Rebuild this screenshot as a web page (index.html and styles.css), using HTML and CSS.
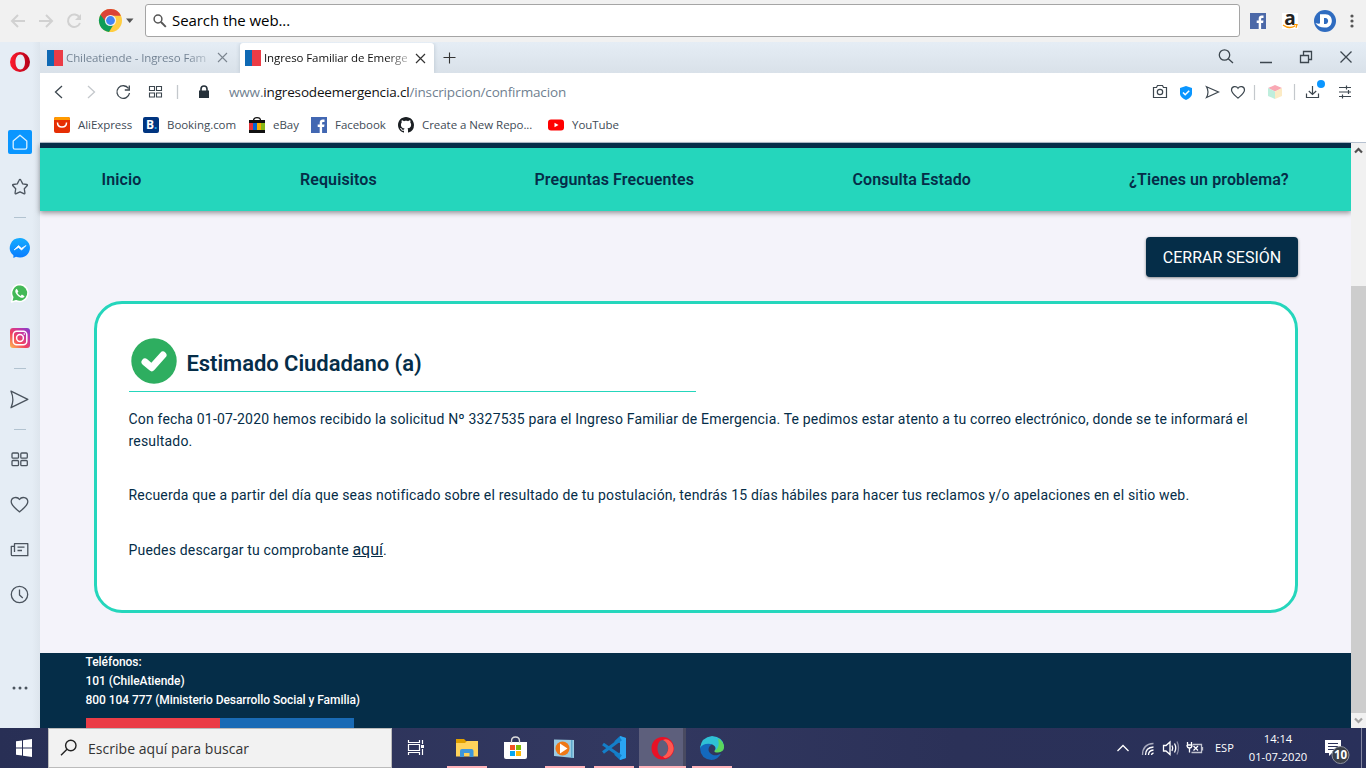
FILE: index.html
```html
<!DOCTYPE html>
<html lang="es">
<head>
<meta charset="utf-8">
<title>Ingreso Familiar de Emergencia</title>
<link rel="stylesheet" href="styles.css">
</head>
<body>
<div class="desktop">
  <header class="searchbar">
    <svg class="history" width="92" height="42" viewBox="0 0 92 42" fill="none" stroke="#d1d1d1" stroke-width="2"><path d="M25 21H12M18 15l-6 6 6 6M39 21h13M46 15l6 6-6 6"/><path d="M79.500 17.500A6.200 6.200 0 1 0 80 23"/><path d="M81 14v6h-6z" fill="#d1d1d1" stroke="none"/></svg>
    <svg class="chrome" width="42" height="42" viewBox="0 0 42 42"><circle cx="18.500" cy="20.500" r="11.500" fill="#ffcd40"/><path d="M18.500 20.500 8.500 14.700A11.500 11.500 0 0 0 17 32l5.500-9z" fill="#0f9d58"/><path d="M8.500 14.700a11.500 11.500 0 0 1 20.400 1H18.500l-4 7z" fill="#db4437"/><circle cx="18.500" cy="20.500" r="5.600" fill="#f1f1f1"/><circle cx="18.500" cy="20.500" r="4.400" fill="#4285f4"/><path d="M34 18.500h7.500L37.700 23z" fill="#555"/></svg>
    <div class="field">
      <svg width="14" height="14" viewBox="0 0 14 14" fill="none" stroke="#555" stroke-width="1.500"><circle cx="5" cy="5" r="3.900"/><path d="m8 8 4.800 4.800" stroke-width="1.900"/></svg>
      <span class="field-text t">Search the web...</span>
    </div>
    <div class="shortcuts">
      <svg width="16" height="16" viewBox="0 0 16 16"><path fill="#4c69a8" d="M0 0h16v16H0z"/><path fill="#fff" d="M8.700 16V10H6.700V7.500h2V5.800c0-2.100 1.200-3.200 3.100-3.200h1.700v2.300h-1.200c-.9 0-1.200.4-1.200 1.200v1.400h2.400L13.100 10h-2v6z"/></svg>
      <span class="amazon">a<svg width="16" height="5" viewBox="0 0 16 5" fill="none" stroke="#f90" stroke-width="1.300"><path d="M1 1q6 4.500 12 1M12 .7l3 0-1 3"/></svg></span>
      <svg width="22" height="22" viewBox="0 0 22 22"><circle cx="11" cy="11" r="11" fill="#2f6cc0"/><path d="M6 4.200h5.500c8.500 0 8.500 13.300 0 13.300-4 .3-8-1-10-4.500 1.800.8 3.200.9 4.500.6z" fill="#fff"/><path d="M10 8h1.500c3.500 0 3.500 6 0 6H10z" fill="#2f6cc0"/></svg>
      <svg width="4" height="16" viewBox="0 0 4 16" fill="#555"><circle cx="2" cy="3" r="1.600"/><circle cx="2" cy="8" r="1.600"/><circle cx="2" cy="13" r="1.600"/></svg>
    </div>
  </header>

  <div class="browser">
    <aside class="sidebar">
      <svg width="40" height="686" viewBox="0 42 40 686" fill="none" stroke="#4b545e" stroke-width="1.300" stroke-linejoin="round">
        <defs>
          <linearGradient id="red" x1="0" x2="1"><stop offset="0" stop-color="#ff1b2d"/><stop offset="1" stop-color="#b30019"/></linearGradient>
          <linearGradient id="msg" x1="0" y1="0" x2="0" y2="1"><stop offset="0" stop-color="#14acff"/><stop offset="1" stop-color="#0a7cff"/></linearGradient>
          <linearGradient id="ig" x1="0" y1="1" x2="1" y2="0"><stop offset="0" stop-color="#fec053"/><stop offset=".4" stop-color="#f2425c"/><stop offset=".7" stop-color="#c536a4"/><stop offset="1" stop-color="#7a3fd0"/></linearGradient>
        </defs>
        <path fill="url(#red)" stroke="none" fill-rule="evenodd" d="M20 52a10 10 0 1 0 0 20 10 10 0 0 0 0-20zm.3 2.500c3 0 4.700 3.300 4.700 7.500s-1.700 7.500-4.700 7.500-4.800-3.300-4.800-7.500 1.800-7.500 4.800-7.500z"/>
        <rect x="8" y="130" width="24" height="24" rx="2" fill="#0a96ff" stroke="none"/>
        <path stroke="#d9f0ff" d="M20 135.200 13.200 141v6.500q0 1.700 1.700 1.700h10.200q1.700 0 1.700-1.700V141z"/>
        <path d="M20 179.500q.6 0 .9.700l1.800 3.700 4 .6q1.200.3.400 1.300l-2.800 3 .6 4q.1 1.400-1.100.9L20 191.800l-3.800 1.900q-1.200.5-1.100-.9l.6-4-2.800-3q-.8-1 .4-1.300l4-.6 1.800-3.700q.3-.7.900-.7z"/>
        <path stroke="#b2c3d0" stroke-width="1" d="M14 217.500h12M14 368.500h12M14 429.500h12"/>
        <path fill="url(#msg)" stroke="none" d="M20 238a10 9.800 0 1 1-4 18.800l-2.600 1.100v-2.600A10 9.800 0 0 1 20 238z"/><path d="m14 250 4.500-4.500 3 2.700 4.500-2.700-4.400 4.600-3.100-2.600z" fill="#fff" stroke="#fff" stroke-width=".7"/>
        <path d="M20 284.500a8.500 8.500 0 0 0-7.300 12.700L11.500 302l4.600-1.200A8.500 8.500 0 1 0 20 284.500z" fill="#43b957" stroke="#fff" stroke-width="1.500"/><path d="M16.800 288.700c-2.100.9-2 3.700.4 6.200s5.600 4.400 7.400 1.400l-2.700-1.700-1.300 1.300q-2-.8-3.200-3l1-1.300z" fill="#fff" stroke="none"/>
        <rect x="10" y="328" width="20" height="20" rx="3" fill="url(#ig)" stroke="none"/><g stroke="#fff" stroke-width="1.500"><rect x="13.200" y="331.200" width="13.600" height="13.600" rx="3.500"/><circle cx="20" cy="338" r="3.400"/><path d="M23.700 334h1.200"/></g>
        <path d="m11 391.200 16.800 8.200L11 407.700q3.700-8.200 0-16.500z"/>
        <rect x="12" y="453" width="6.500" height="5.200" rx="1"/><rect x="20.800" y="453" width="6.500" height="5.200" rx="1"/><rect x="12" y="460.500" width="6.500" height="5.200" rx="1"/><rect x="20.800" y="460.500" width="6.500" height="5.200" rx="1"/>
        <path d="M19.500 499.500c2-3.200 8.300-2.600 8.300 2.200 0 3.700-4 6.500-8.300 10.200-4.300-3.700-8.300-6.500-8.300-10.200 0-4.800 6.300-5.400 8.300-2.200z"/>
        <path d="M14.500 552v-8.300h13.300v12H12.500q-1.200 0-1.200-1.200v-8.200h3.200M17.500 547.200h7M17.500 550.500h4.500"/>
        <circle cx="19.500" cy="594.500" r="8.200"/><path d="M19.500 589.500v5.500l3.300 3"/>
        <g fill="#4b545e" stroke="none"><circle cx="14" cy="688" r="1.500"/><circle cx="20" cy="688" r="1.500"/><circle cx="26" cy="688" r="1.500"/></g>
      </svg>
    </aside>

    <div class="window">
      <div class="tabs">
        <div class="tab"><i class="flag"></i><span class="tab-title t">Chileatiende - Ingreso Fam</span><svg width="11" height="11" viewBox="0 0 11 11" stroke="#7b858f" stroke-width="1.100"><path d="m1 1 9 9m0-9-9 9"/></svg></div>
        <div class="tab active"><i class="flag"></i><span class="tab-title t">Ingreso Familiar de Emerge</span><svg width="11" height="11" viewBox="0 0 11 11" stroke="#333" stroke-width="1.200"><path d="m1 1 9 9m0-9-9 9"/></svg></div>
        <svg class="plus" width="12" height="12" viewBox="0 0 12 12" stroke="#333" stroke-width="1.100"><path d="M6.500 .5v11M.5 5.500h12"/></svg>
        <svg class="controls" width="140" height="31" viewBox="1216 42 140 31" fill="none" stroke="#3c464e" stroke-width="1.300"><circle cx="1224.500" cy="55" r="5.200"/><path d="m1228.300 58.800 4.700 4.300M1260 62.500h12"/><path d="M1300.500 55.500h8v7h-8zM1303.500 55v-3.500h8v8H1309"/><path d="m1340.500 51.500 11 11m0-11-11 11"/></svg>
      </div>

      <div class="address">
        <svg width="172" height="38" viewBox="40 73 172 38" fill="none" stroke="#3c464e" stroke-width="1.300"><path d="m62 86-6.500 6 6.500 6"/><path stroke="#c4c8cc" d="m88 86 6.500 6-6.500 6"/><path d="M128.500 88.500a6.300 6.300 0 1 0 1 4.500M129.300 85.500V90h-4.500"/><path stroke-width="1.100" d="M149.500 86.500h5v4h-5zM156.500 86.500h5v4h-5zM149.500 93h5v4h-5zM156.500 93h5v4h-5z"/><path stroke="#c4c8cc" d="M177.500 85v14"/><path fill="#26313a" stroke="none" d="M199 90.500h10v7.500h-10z"/><path stroke="#26313a" stroke-width="1.600" d="M201 91v-2a3 3 0 0 1 6 0v2"/></svg>
        <span class="url t">www.<b>ingresodeemergencia.cl</b>/inscripcion/confirmacion</span>
        <svg class="tools" width="210" height="38" viewBox="1146 73 210 38" fill="none" stroke="#3c464e" stroke-width="1.200"><path d="M1153.500 87.500h3l1-2h5l1 2h3v10h-13z"/><circle cx="1160" cy="92" r="2.700"/><path fill="#0a96ff" stroke="none" d="m1186 86 6 2v6q-.5 3.500-6 6-5.500-2.500-6-6v-6z"/><path stroke="#fff" stroke-width="1.600" d="m1183 92.500 2.200 2.200 4-4"/><path d="m1206.500 86.800 12 5.200-12 5.500q3-5.500 0-10.700z"/><path d="M1238 88.300c1.700-2.800 6.500-2.200 6.500 1.800 0 3-3 5-6.500 8-3.500-3-6.500-5-6.500-8 0-4 4.800-4.600 6.500-1.800z"/><path stroke="#c4c8cc" d="M1254.500 85v15M1294.500 84v16"/><g stroke="none"><path fill="#f9a8b4" d="m1275 85 7 3-7 3.500-7-3.500z"/><path fill="#bfeedd" d="m1268 88 7 3.500v7.500l-7-3z"/><path fill="#fcebc5" d="m1282 88-7 3.500v7.500l7-3z"/></g><path d="M1306.500 93.500v4h12v-4M1312.500 86v8.500M1308.800 91l3.700 3.500 3.700-3.500"/><circle cx="1321" cy="84" r="4" fill="#0a96ff" stroke="none"/><path d="M1339 87.500h12M1339 92h12M1339 96.500h12M1346.500 85.500v4M1348.500 90v4M1342.500 94.500v4"/></svg>
      </div>

      <nav class="bookmarks">
        <a class="bm w1"><svg width="16" height="16" viewBox="0 0 16 16"><rect width="16" height="16" rx="2" fill="#e62e04"/><path d="M0 3V2q0-2 2-2h12q2 0 2 2v1z" fill="#ff9a00"/><path d="M3.500 5.500q0 4.500 4.500 4.500t4.500-4.500" fill="none" stroke="#fff" stroke-width="1.500"/></svg><span class="t">AliExpress</span></a>
        <a class="bm w2"><i class="booking">B<em>.</em></i><span class="t">Booking.com</span></a>
        <a class="bm w3"><svg width="16" height="16" viewBox="0 0 16 16"><path d="M0 4h16v9H0z" fill="#e53238"/><path d="M4 6h4v7H4z" fill="#0064d2"/><path d="M8 6h4v7H8z" fill="#f5af02"/><path d="M12 6h4v7h-4z" fill="#86b817"/><path d="M0 3h16v3H0zM0 13h16v3H0z" fill="#111"/><path d="M4.500 6V3.500a3.500 2.800 0 0 1 7 0V6" fill="none" stroke="#111" stroke-width="1.200"/></svg><span class="t">eBay</span></a>
        <a class="bm w4"><svg width="16" height="16" viewBox="0 0 16 16"><path fill="#4267b2" d="M0 0h16v16H0z"/><path fill="#fff" d="M8.700 16V10H6.700V7.500h2V5.800c0-2.100 1.200-3.200 3.100-3.200h1.700v2.300h-1.200c-.9 0-1.200.4-1.200 1.200v1.400h2.400L13.100 10h-2v6z"/></svg><span class="t">Facebook</span></a>
        <a class="bm w5"><svg width="16" height="16" viewBox="0 0 16 16" fill="#1b1f23"><path d="M8 0C3.580 0 0 3.580 0 8c0 3.540 2.290 6.530 5.470 7.590.4.070.55-.17.55-.38 0-.19-.01-.82-.01-1.490-2.010.37-2.530-.49-2.690-.94-.09-.23-.48-.94-.82-1.130-.28-.15-.68-.52-.01-.53.63-.01 1.080.58 1.230.82.720 1.210 1.870.87 2.330.66.070-.52.280-.87.510-1.070-1.780-.2-3.640-.89-3.640-3.950 0-.87.31-1.590.82-2.150-.08-.2-.36-1.020.08-2.120 0 0 .67-.21 2.200.82.640-.18 1.320-.27 2-.27s1.360.09 2 .27c1.530-1.040 2.200-.82 2.200-.82.44 1.100.16 1.920.08 2.120.51.560.82 1.270.82 2.150 0 3.070-1.870 3.750-3.650 3.950.29.25.54.73.54 1.480 0 1.070-.01 1.930-.01 2.200 0 .21.15.46.55.38A8.010 8.010 0 0 0 16 8c0-4.420-3.580-8-8-8z"/></svg><span class="t">Create a New Repo...</span></a>
        <a class="bm w6"><svg width="16" height="16" viewBox="0 0 16 16"><rect y="2.500" width="16" height="11" rx="3" fill="red"/><path d="m6.500 5.800 4 2.200-4 2.200z" fill="#fff"/></svg><span class="t">YouTube</span></a>
      </nav>

      <div class="viewport">
        <main class="page">
          <nav class="menu"><a class="m1 t">Inicio</a><a class="m2 t">Requisitos</a><a class="m3 t">Preguntas Frecuentes</a><a class="m4 t">Consulta Estado</a><a class="m5 t">¿Tienes un problema?</a></nav>
          <section class="content">
            <button class="logout">CERRAR SESIÓN</button>
            <article class="card">
              <h1><svg width="46" height="46" viewBox="0 0 46 46"><circle cx="23" cy="23" r="22.700" fill="#2eae60"/><path d="m14 24 6.700 5.700L32 17" fill="none" stroke="#fff" stroke-width="7" stroke-linecap="round" stroke-linejoin="round"/></svg><span class="t">Estimado Ciudadano (a)</span></h1>
              <p>Con fecha 01-07-2020 hemos recibido la solicitud Nº 3327535 para el Ingreso Familiar de Emergencia. Te pedimos estar atento a tu correo electrónico, donde se te informará el<br>resultado.</p>
              <p>Recuerda que a partir del día que seas notificado sobre el resultado de tu postulación, tendrás 15 días hábiles para hacer tus reclamos y/o apelaciones en el sitio web.</p>
              <p>Puedes descargar tu comprobante <a>aquí</a>.</p>
            </article>
          </section>
          <footer class="footer">Teléfonos:<br>101 (ChileAtiende)<br>800 104 777 (Ministerio Desarrollo Social y Familia)<div class="stripe"></div></footer>
        </main>
        <div class="scroll">
          <svg width="15" height="15" viewBox="0 0 15 15" fill="none" stroke="#505050" stroke-width="2.200"><path d="M4 9.500 7.500 6 11 9.500"/></svg>
          <div class="thumb"></div>
          <svg width="15" height="15" viewBox="0 0 15 15" fill="none" stroke="#a3a3a3" stroke-width="2.200"><path d="M4 5.500 7.500 9 11 5.500"/></svg>
        </div>
      </div>
    </div>
  </div>

  <footer class="taskbar">
    <svg class="start" width="48" height="40" viewBox="0 0 48 40" fill="#fff"><path d="m16 13.200 6-.8v7.100h-6zM23 12.300l9-1.200v8.400h-9zM16 20.500h6v7.100l-6-.8zM23 20.500h9v8.400l-9-1.200z"/></svg>
    <div class="search">
      <svg width="18" height="18" viewBox="0 0 18 18" fill="none" stroke="#222" stroke-width="1.400"><circle cx="10.800" cy="6.500" r="5.200"/><path d="M7 10.300 1 16.300"/></svg>
      <span class="t">Escribe aquí para buscar</span>
    </div>
    <svg class="apps" width="348" height="40" viewBox="392 728 348 40">
      <path fill="#5d5f7c" d="M639 728h44v40h-44z"/><path fill="#494a61" d="M683 728h3v40h-3z"/>
      <path fill="#ffb3ba" d="M447 766h40v2h-40zM545 766h40v2h-40zM594 766h40v2h-40zM639 766h47v2h-47zM692 766h40v2h-40z"/>
      <path fill="none" stroke="#fff" stroke-width="1.200" d="M408.500 740v2.500h11V740M408.500 755v-2.500h11v2.500M408.500 744.500h11v6h-11zM422.500 740v4M422.500 749v6"/><path fill="#fff" d="M421 745h3v3h-3z"/>
      <path fill="#e0a000" d="M456 739h8l2 2h11v5h-21z"/><path fill="#ffd35b" d="M456 743h9l2-2h11v15.500h-22z"/><path fill="#3e97dc" d="M460 757v-6q0-2 2-2h9.500q2 0 2 2v6h-4v-4h-5.500v4z"/>
      <path fill="#fff" d="M504 742h23v15q0 2-2 2h-19q-2 0-2-2z"/><path fill="none" stroke="#ddd" stroke-width="1.300" d="M511.500 743v-2q0-4 4-4t4 4v2"/><path fill="#f35325" d="M510 745h5v5h-5z"/><path fill="#81bc06" d="M516 745h5v5h-5z"/><path fill="#05a6f0" d="M510 751h5v5h-5z"/><path fill="#ffba08" d="M516 751h5v5h-5z"/>
      <path fill="#9bcbe2" d="M554 739.500 574 740v18l-20-2z"/><path fill="#5fa8cc" d="M571 740h1.500v18H571z"/><circle cx="562.500" cy="748.500" r="7" fill="#ef7816"/><path fill="#fff" d="m560 743.500 7.500 5-7.500 5z"/>
      <path fill="#0f7fcb" d="m620 736 6 2v20l-6 2-6-5.500 6-2v-9.500l-6-1.500z"/><path fill="#2aa5f2" d="m620 736 6 2v20l-6 2z"/><path fill="none" stroke="#147fc9" stroke-width="3.200" d="m603 744 18 12.500M603 752.500l18-13.500"/>
      <path fill="#e81126" fill-rule="evenodd" d="M662.500 737c-6.500 0-11 5-11 11.200s4.500 11.300 11 11.300 11.500-5 11.500-11.300S669 737 662.500 737zm.3 3c3 0 5.200 3.500 5.200 8.200s-2.200 8.300-5.200 8.300-5.300-3.600-5.300-8.300 2.300-8.200 5.300-8.200z"/><path fill="#ff5850" d="M663 740q4-2 7.500 1.500t3 8.500q-1 4.500-5 7t-5.500-.5c7-3 7-13.500 0-16.500z"/>
      <path fill="#1469bd" d="M700 748c1-6 9-8 13-4-4 1-6 6-3 9s7 3 11 .5q-3 6-9.500 6.500-11-1-11.500-12z"/><path fill="#2fc1d5" d="M700 748q1.500-11 12-12 11 1 12 10c0 6-7 7-9.500 5 2.500-3 0-6.500-4-7q-7-1-10.500 4z"/><path fill="#5bd65c" d="M718 738.500q6 3 6 9-.5 4.500-6 5-4 0-3.500-1.500 6-3 3.500-12.500z"/>
    </svg>
    <svg class="tray" width="96" height="40" viewBox="1112 728 96 40" fill="none" stroke="#fff" stroke-width="1.300"><path d="m1117.500 751 5.500-5.500 5.500 5.500"/><g stroke="#a8aabd"><path d="M1142.500 755q0-11 11-11.500"/><path stroke="#fff" d="M1145.500 755q0-7.500 8-8M1148.500 755q0-4.500 5-5M1151.500 755q0-1.500 2-2"/></g><path d="M1163.500 745.500h2.500l4-3.500v12.500l-4-3.500h-2.500zM1172 745.500q1.500 2.500 0 5.500M1174.500 743.500q2.500 4.500 0 9"/><path stroke="#888aa4" d="M1177 741.500q3 6.500 0 13"/><path d="M1187.500 742v3M1191.500 742v3M1187 745h5q0 3-2.500 3t-2.500-3M1189.500 748v4.500"/><path stroke="#c2c4d0" d="M1193 744.500h8.500v8h-10M1202.500 747v3.500"/><path d="m1193.500 746 4.500 4.500m0-4.500-4.500 4.500"/></svg>
    <span class="lang">ESP</span>
    <div class="clock"><span>14:14</span><span class="t">01-07-2020</span></div>
    <svg class="notify" width="46" height="40" viewBox="1320 728 46 40"><path fill="#fff" d="M1325 740h16v13h-9l-3 3v-3h-4z"/><path stroke="#2b3158" stroke-width="1.200" d="M1328 743.500h10M1328 746.500h10M1328 749.500h7"/><circle cx="1340.500" cy="755" r="8.500" fill="#3b4049" stroke="#8e929c"/><text x="1340.500" y="759" text-anchor="middle" class="count">10</text><path fill="#8386a0" d="M1361 728h1v40h-1z"/></svg>
  </footer>
</div>
</body>
</html>
```

FILE: styles.css
```css
* { box-sizing: border-box; }
body { margin: 0; font-family: "Open Sans", "Noto Sans", sans-serif; }
svg { display: block; flex: none; }
.t { white-space: nowrap; }
.desktop { width: 1366px; height: 768px; overflow: hidden; display: flex; flex-direction: column; background: #e4ecf4; }

.searchbar { height: 42px; flex: none; display: flex; align-items: center; background: #f1f1f1; }
.chrome { margin-right: 11px; }
.field { width: 1095px; height: 33px; display: flex; align-items: center; gap: 5px; padding-left: 7px; margin-top: -1px; background: #fff; border: 1px solid #a5a5a5; border-radius: 3px; }
.field-text { margin-top: -2px; font-size: 15px; letter-spacing: -.07px; color: #000; }
.shortcuts { display: flex; align-items: center; padding-left: 10px; }
.amazon { display: flex; flex-direction: column; align-items: center; width: 16px; height: 16px; margin: 0 16px; background: #fff; font: bold 19px/11px "Open Sans", sans-serif; color: #222; }
.shortcuts > svg:last-child { margin-left: 14px; }

.browser { height: 686px; flex: none; display: flex; }
.sidebar { width: 40px; background: linear-gradient(90deg, #e5edf5 80%, #dde5ed); }
.window { width: 1326px; display: flex; flex-direction: column; background: #fff; }
.tabs { height: 31px; display: flex; align-items: center; background: linear-gradient(#e5edf5, #d9e1e9); }
.tab { height: 30px; display: flex; align-items: center; width: 200px; padding-left: 7px; }
.tab.active { width: 194px; padding-left: 5px; background: #fff; border-radius: 3px 3px 0 0; align-self: flex-end; box-shadow: 0 0 4px #b9c4cf; clip-path: inset(0 -4px 0 -4px); }
.flag { width: 16px; height: 16px; background: linear-gradient(90deg, #0f69b4 44%, #eb3c46 44%); }
.active .flag { margin-top: -1px; }
.tab-title { width: 143px; margin-left: 3px; margin-right: 8px; font-size: 11.500px; letter-spacing: -.1px; color: transparent; background: linear-gradient(90deg, #6f7f90 85%, #c3ccd5); -webkit-background-clip: text; background-clip: text; }
.active .tab-title { margin-top: -1px; background-image: linear-gradient(90deg, #111 85%, #b5b5b5); }
.plus { margin: 0 auto 0 9px; overflow: visible; }
.controls { margin-right: 10px; }

.address { height: 38px; display: flex; align-items: center; }
.url { margin-left: 17px; font-size: 13.500px; letter-spacing: -.16px; color: #6f7f90; }
.url b { font-weight: 400; color: #111; }
.tools { margin-left: auto; margin-right: 10px; }

.bookmarks { height: 32px; display: flex; padding: 0 0 4px 14px; border-bottom: 1px solid #b6c1d0; }
.bm { display: flex; align-items: center; gap: 8px; font-size: 11.500px; letter-spacing: -.05px; color: #414b56; }
.w1 { width: 89px; } .w2 { width: 106px; } .w3 { width: 62px; } .w4 { width: 87px; } .w5 { width: 150px; }
.booking { width: 16px; height: 16px; border-radius: 2px; background: #003580; color: #fff; font: bold 12px/15px "Open Sans", sans-serif; padding-left: 3px; }
.booking em { font-style: normal; color: #20a8ea; }

.viewport { height: 585px; display: flex; }
.page { width: 1311px; display: flex; flex-direction: column; background: #f4f3fa; font-family: Roboto, sans-serif; color: #052d48; }
.menu { height: 68px; flex: none; display: flex; align-items: center; padding-left: 61.500px; border-top: 5px solid #052d48; background: #25d6bc; box-shadow: 0 2px 5px rgba(0,0,0,.4); font-size: 16px; font-weight: 600; letter-spacing: .1px; }
.m1 { width: 198.500px; } .m2 { width: 234.500px; } .m3 { width: 318px; } .m4 { width: 276.500px; }
.content { height: 442px; padding: 26px 53px 40px 54px; display: flex; flex-direction: column; }
.logout { align-self: flex-end; width: 152px; height: 40px; flex: none; border: 0; border-radius: 4px; background: #052d48; color: #fff; font: 400 16px Roboto, sans-serif; box-shadow: 0 1px 3px rgba(0,0,0,.45); padding: 0; }
.card { height: 312px; flex: none; margin-top: 24px; padding: 34px 31px 0 31.500px; background: #fff; border: 3px solid #25d6bc; border-radius: 28px; font-size: 14px; line-height: 22px; letter-spacing: .175px; }
.card h1 { display: flex; gap: 9.500px; width: 567.500px; height: 54px; margin: 0 0 16px; padding-left: 2.500px; border-bottom: 1px solid #25d6bc; font-size: 22px; font-weight: 600; line-height: 52px; letter-spacing: -.05px; }
.card p { margin: 0 0 32px; white-space: nowrap; }
.card p:last-child { padding-top: 1px; }
.card a { font-size: 16px; letter-spacing: 0; text-decoration: underline; }
.footer { height: 75px; background: #052d48; color: #fff; padding-left: 45.500px; font-size: 12px; font-weight: 500; line-height: 19px; letter-spacing: -.055px; overflow: hidden; }
.stripe { width: 268px; height: 10px; margin: 8px 0 0 .5px; background: linear-gradient(90deg, #eb3c46 50%, #196ab5 50%); }
.scroll { width: 15px; display: flex; flex-direction: column; background: #f1f1f1; }
.thumb { height: 427px; margin-top: 128px; background: #cdcdcd; }

.taskbar { height: 40px; display: flex; color: #fff; background: linear-gradient(90deg, #282f55, #323860 45%, #2b3158 70%, #29305a); }
.search { width: 344px; height: 40px; display: flex; align-items: center; gap: 10px; padding-left: 11px; background: #f2f2f2; border: 1px solid #bbb; color: #333; font-size: 14px; letter-spacing: .04px; }
.tray { margin-left: 372px; }
.lang { width: 40px; padding-left: 7px; font-size: 11px; line-height: 40px; }
.clock { width: 60px; margin-right: 12px; display: flex; flex-direction: column; align-items: center; font-size: 11.200px; line-height: 18px; padding-top: 2px; }
.count { font: bold 11.500px "Open Sans", sans-serif; fill: #fff; }
```
